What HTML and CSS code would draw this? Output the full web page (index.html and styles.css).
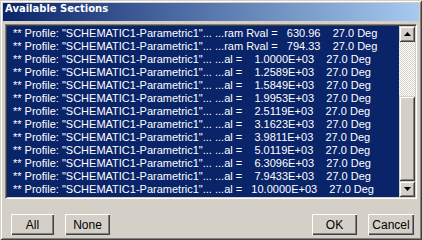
FILE: index.html
```html
<!DOCTYPE html>
<html lang="en">
<head>
    <title>Available Sections</title>
    <meta charset="utf-8">
    <link rel="stylesheet" href="styles.css">
</head>
<body>
<div class="dialog">
    <div class="caption">Available Sections</div>
    <div class="content">
        <div class="list-box">
            <ul class="list">
                <li>** Profile: "SCHEMATIC1-Parametric1"... ...ram Rval =   630.96    27.0 Deg</li>
                <li>** Profile: "SCHEMATIC1-Parametric1"... ...ram Rval =   794.33    27.0 Deg</li>
                <li>** Profile: "SCHEMATIC1-Parametric1"... ...al =    1.0000E+03    27.0 Deg</li>
                <li>** Profile: "SCHEMATIC1-Parametric1"... ...al =    1.2589E+03    27.0 Deg</li>
                <li>** Profile: "SCHEMATIC1-Parametric1"... ...al =    1.5849E+03    27.0 Deg</li>
                <li>** Profile: "SCHEMATIC1-Parametric1"... ...al =    1.9953E+03    27.0 Deg</li>
                <li>** Profile: "SCHEMATIC1-Parametric1"... ...al =    2.5119E+03    27.0 Deg</li>
                <li>** Profile: "SCHEMATIC1-Parametric1"... ...al =    3.1623E+03    27.0 Deg</li>
                <li>** Profile: "SCHEMATIC1-Parametric1"... ...al =    3.9811E+03    27.0 Deg</li>
                <li>** Profile: "SCHEMATIC1-Parametric1"... ...al =    5.0119E+03    27.0 Deg</li>
                <li>** Profile: "SCHEMATIC1-Parametric1"... ...al =    6.3096E+03    27.0 Deg</li>
                <li>** Profile: "SCHEMATIC1-Parametric1"... ...al =    7.9433E+03    27.0 Deg</li>
                <li>** Profile: "SCHEMATIC1-Parametric1"... ...al =   10.0000E+03    27.0 Deg</li>
            </ul>
            <div class="scrollbar">
                <div class="scroll-btn">
                    <svg width="7" height="4" viewBox="0 0 7 4"><path d="M3.5 0 L7 4 L0 4 Z" fill="#000"/></svg>
                </div>
                <div class="track"></div>
                <div class="thumb"></div>
                <div class="scroll-btn">
                    <svg width="7" height="4" viewBox="0 0 7 4"><path d="M0 0 L7 0 L3.5 4 Z" fill="#000"/></svg>
                </div>
            </div>
        </div>
        <div class="buttons">
            <div class="group">
                <button class="btn btn-all">All</button>
                <button class="btn btn-none">None</button>
            </div>
            <div class="group">
                <button class="btn btn-ok">OK</button>
                <button class="btn btn-cancel">Cancel</button>
            </div>
        </div>
    </div>
</div>
</body>
</html>
```

FILE: styles.css
```css
body {
    margin: 0;
    background: #d4d0c8;
}
/* win classic raised frame */
.dialog {
    width: 422px;
    height: 240px;
    box-sizing: border-box;
    padding: 3px;
    background: #d4d0c8;
    box-shadow: inset 1px 1px 0 #d4d0c8, inset -1px -1px 0 #404040,
                inset 2px 2px 0 #fff, inset -2px -2px 0 #808080;
}
.caption {
    height: 18px;
    line-height: 18px;
    padding-left: 2px;
    color: #fff;
    font: bold 10px "DejaVu Sans", Tahoma, sans-serif;
    background: linear-gradient(to right, #0a246a, #a6caf0);
}
.content {
    padding: 3px 2px 0 2px;
}
.list-box {
    display: flex;
    height: 175px;
    box-sizing: border-box;
    border: 1px solid;
    border-color: #808080 #fff #fff #808080;
    box-shadow: inset 1px 1px 0 #404040, inset -1px -1px 0 #d4d0c8;
    padding: 1px;
    background: #0a246a;
}
.list {
    flex: 1;
    margin: 0;
    padding: 1px 0 0 6px;
    list-style: none;
    overflow: hidden;
}
.list li {
    height: 13px;
    line-height: 13px;
    color: #fff;
    font: 11px "Liberation Sans", Arial, sans-serif;
    white-space: pre;
}
.scrollbar {
    width: 16px;
    display: flex;
    flex-direction: column;
}
.scroll-btn {
    height: 16px;
    box-sizing: border-box;
    display: flex;
    align-items: center;
    justify-content: center;
    background: #d4d0c8;
    box-shadow: inset 1px 1px 0 #d4d0c8, inset -1px -1px 0 #404040,
                inset 2px 2px 0 #fff, inset -2px -2px 0 #808080;
}
.track {
    height: 54px;
    background-color: #fff;
    background-image: linear-gradient(45deg, #d4d0c8 25%, transparent 25%, transparent 75%, #d4d0c8 75%),
                      linear-gradient(45deg, #d4d0c8 25%, transparent 25%, transparent 75%, #d4d0c8 75%);
    background-size: 2px 2px;
    background-position: 0 0, 1px 1px;
}
.thumb {
    flex: 1;
    background: #d4d0c8;
    box-shadow: inset 1px 1px 0 #d4d0c8, inset -1px -1px 0 #404040,
                inset 2px 2px 0 #fff, inset -2px -2px 0 #808080;
}
.buttons {
    display: flex;
    justify-content: space-between;
    padding: 15px 3px 0 6px;
}
.group {
    display: flex;
    gap: 11px;
}
.btn {
    height: 21px;
    padding: 0;
    border: none;
    font: 12px "Liberation Sans", Arial, sans-serif;
    color: #000;
    background: #d4d0c8;
    box-shadow: inset 1px 1px 0 #fff, inset -1px -1px 0 #404040,
                inset -2px -2px 0 #808080;
}
.btn-all { width: 43px; }
.btn-none { width: 45px; }
.btn-ok { width: 45px; }
.btn-cancel { width: 46px; }
```
